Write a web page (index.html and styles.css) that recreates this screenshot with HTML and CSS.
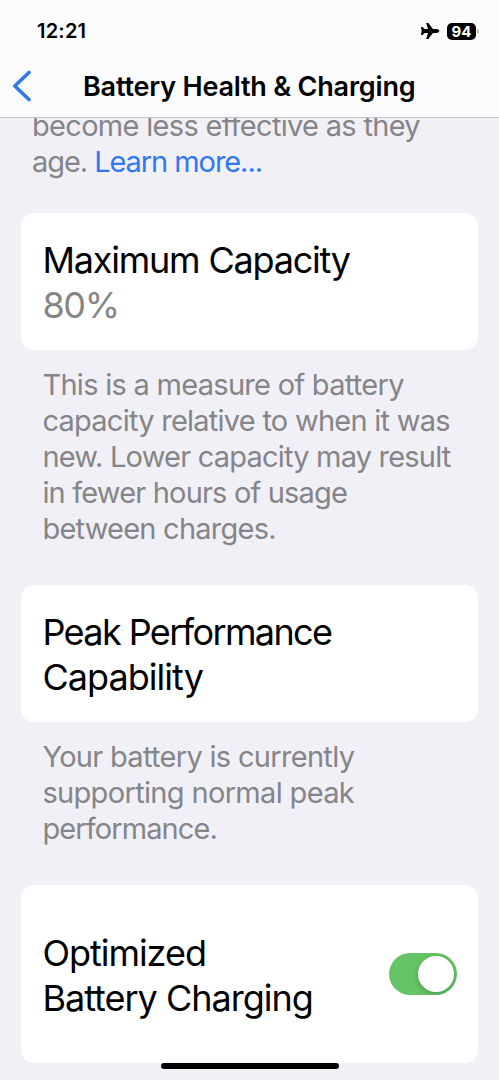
FILE: index.html
```html
<!DOCTYPE html>
<html lang="en">
<head>
<meta charset="utf-8">
<title>Battery Health &amp; Charging</title>
<link rel="stylesheet" href="styles.css">
</head>
<body>
<div class="phone">
  <header class="top">
    <div class="status">
      <span class="time"><span class="t t-time">12:21</span></span>
      <svg class="plane" viewBox="0 0 20 18" width="20" height="18"><path d="M19.3 9C19.3 7.8 17.8 7.1 16.3 7.1H12.9L8.4 .9H6.1L8 7.1H4.6L2.6 4.9H.9L1.7 9L.9 13.1H2.6L4.6 10.9H8L6.1 17.1H8.4L12.9 10.9H16.3C17.8 10.9 19.3 10.2 19.3 9Z"/></svg>
      <div class="battery"><span class="t t-batt">94</span></div>
      <i class="nub"></i>
    </div>
    <div class="nav">
      <svg class="back" viewBox="0 0 20 32" width="20" height="32"><path d="M18 2.5L3.8 16L18 29.5"/></svg>
      <h1><span class="t t-title">Battery Health &amp; Charging</span></h1>
    </div>
  </header>
  <main class="content">
    <p class="note intro"><span class="t i1">become less effective as they</span><br><span class="t i2">age. <a class="link">Learn more...</a></span></p>
    <section class="card">
      <div class="label"><span class="t c1">Maximum Capacity</span></div>
      <div class="value"><span class="t c2">80%</span></div>
    </section>
    <p class="note n1"><span class="t a1">This is a measure of battery</span><br><span class="t a2">capacity relative to when it was</span><br><span class="t a3">new. Lower capacity may result</span><br><span class="t a4">in fewer hours of usage</span><br><span class="t a5">between charges.</span></p>
    <section class="card">
      <div class="label"><span class="t p1">Peak Performance</span><br><span class="t p2">Capability</span></div>
    </section>
    <p class="note n2"><span class="t b1">Your battery is currently</span><br><span class="t b2">supporting normal peak</span><br><span class="t b3">performance.</span></p>
    <section class="card toggle-row">
      <div class="label"><span class="t o1">Optimized</span><br><span class="t o2">Battery Charging</span></div>
      <div class="switch"><i class="knob"></i></div>
    </section>
  </main>
  <div class="home"></div>
</div>
</body>
</html>
```
FILE: styles.css
```css
* { box-sizing: border-box; }
body { margin: 0; background: #f1f0f6; font-family: Inter, "Liberation Sans", sans-serif; color: #000; }
.phone { position: relative; width: 499px; height: 1080px; overflow: hidden; display: flex; flex-direction: column; }
.t { white-space: nowrap; }
.top { height: 118px; flex: none; background: #fbfbfd; border-bottom: 1px solid #c5c5c9; z-index: 1; }
.status { display: flex; align-items: center; height: 60px; padding: 2px 20px 0 37px; }
.time { flex: 1; font-size: 20px; font-weight: 600; line-height: 24px; }
.t-time { letter-spacing: 0.2px; }
.plane { margin-right: 7px; }
.battery { width: 29px; height: 17px; border-radius: 5px; background: #000; color: #fff; font-size: 15px; font-weight: 700; line-height: 17px; text-align: center; }
.nub { width: 2px; height: 5px; margin-left: 1px; border-radius: 0 2px 2px 0; background: #bbb; }
.nav { display: flex; align-items: center; height: 52px; padding-left: 11px; }
.back { fill: none; stroke: #2f78ea; stroke-width: 3.6; stroke-linecap: round; stroke-linejoin: round; }
h1 { margin: 2px 0 0 52px; font-size: 27px; font-weight: 600; line-height: 32px; }
.t-title { letter-spacing: -0.2px; }
.content { padding: 0 21.4px; }
.note { margin: 0; padding-left: 21px; font-size: 29px; line-height: 36px; color: #858589; }
.intro { margin-top: -10px; padding-left: 10.6px; height: 105.4px; }
.link { color: #2f78f0; }
.card { background: #fff; border-radius: 13px; height: 137px; padding: 24.6px 21px; }
.label, .value { font-size: 36px; line-height: 45px; }
.value { color: #858585; }
.n1 { height: 235px; padding-top: 16.6px; }
.n2 { height: 162.6px; padding-top: 16.6px; }
.toggle-row { display: flex; align-items: center; justify-content: space-between; height: 178px; }
.toggle-row .label { padding-top: 4.4px; }
.switch { width: 68px; height: 42px; border-radius: 21px; background: #65c466; padding: 3px; display: flex; justify-content: flex-end; overflow: hidden; }
.knob { width: 36px; height: 36px; border-radius: 50%; background: #fff; box-shadow: 0 2px 6px rgba(0, 0, 0, 0.22); }
.home { position: absolute; left: 161px; top: 1063px; width: 178px; height: 6px; border-radius: 3px; background: #000; }

/* Per-line tracking */
.i1 { letter-spacing: -0.69px; }
.i2 { letter-spacing: -1.07px; }
.c1 { letter-spacing: -1.2px; }
.c2 { letter-spacing: -1.3px; }
.a1 { letter-spacing: -0.71px; }
.a2 { letter-spacing: -0.75px; }
.a3 { letter-spacing: -0.8px; }
.a4 { letter-spacing: -0.82px; }
.a5 { letter-spacing: -0.77px; }
.p1 { letter-spacing: -1.6px; }
.p2 { letter-spacing: -0.95px; }
.b1 { letter-spacing: -0.69px; }
.b2 { letter-spacing: -0.66px; }
.b3 { letter-spacing: -0.9px; }
.o1 { letter-spacing: -1.02px; }
.o2 { letter-spacing: -1px; }
```
